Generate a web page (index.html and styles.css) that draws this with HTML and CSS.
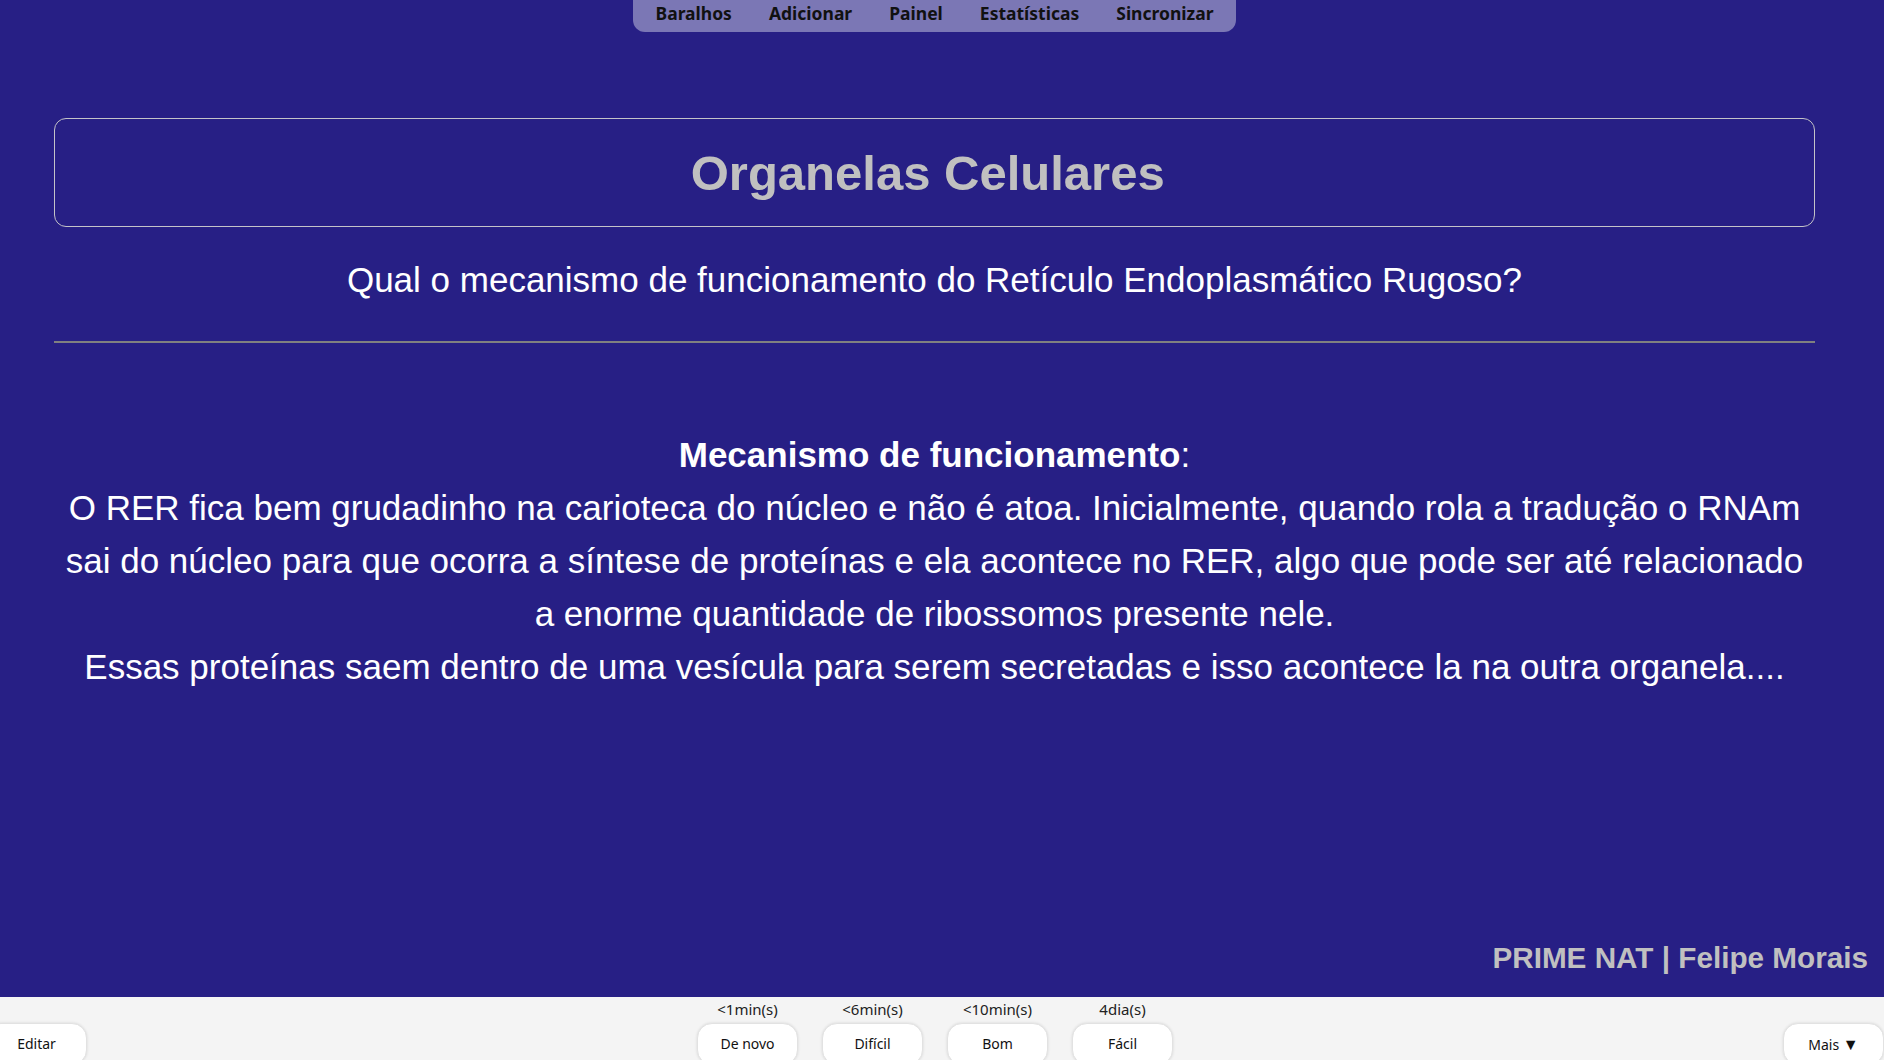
FILE: index.html
```html
<!DOCTYPE html>
<html lang="pt-BR">
<head>
<meta charset="utf-8">
<title>Organelas Celulares</title>
<link rel="stylesheet" href="styles.css">
</head>
<body>
<div class="app">
  <div class="webview">
    <nav class="toolbar">
      <span class="tb-item">Baralhos</span>
      <span class="tb-item">Adicionar</span>
      <span class="tb-item">Painel</span>
      <span class="tb-item">Estatísticas</span>
      <span class="tb-item">Sincronizar</span>
    </nav>
    <div class="card">
      <div class="deck-box">
        <h1 class="deck-title">Organelas Celulares&nbsp;</h1>
      </div>
      <div class="question">Qual o mecanismo de funcionamento do Retículo Endoplasmático Rugoso?</div>
      <hr class="divider">
      <div class="answer"><b>Mecanismo de funcionamento</b>:<br>O RER fica bem grudadinho na carioteca do núcleo e não é atoa. Inicialmente, quando rola a tradução o RNAm sai do núcleo para que ocorra a síntese de proteínas e ela acontece no RER, algo que pode ser até relacionado a enorme quantidade de ribossomos presente nele.<br>Essas proteínas saem dentro de uma vesícula para serem secretadas e isso acontece la na outra organela....</div>
    </div>
    <div class="signature">PRIME NAT | Felipe Morais</div>
  </div>
  <div class="bottombar">
    <div class="bb-left">
      <button class="bb-btn edit-btn">Editar</button>
    </div>
    <div class="bb-middle">
      <div class="ans">
        <span class="ans-time">&lt;1min(s)</span>
        <button class="bb-btn">De novo</button>
      </div>
      <div class="ans">
        <span class="ans-time">&lt;6min(s)</span>
        <button class="bb-btn">Difícil</button>
      </div>
      <div class="ans">
        <span class="ans-time">&lt;10min(s)</span>
        <button class="bb-btn">Bom</button>
      </div>
      <div class="ans">
        <span class="ans-time">4dia(s)</span>
        <button class="bb-btn">Fácil</button>
      </div>
    </div>
    <div class="bb-right">
      <button class="bb-btn">Mais <span class="caret">▼</span></button>
    </div>
  </div>
</div>
</body>
</html>
```

FILE: styles.css
```css
* {
  box-sizing: border-box;
}

html, body {
  margin: 0;
  padding: 0;
  height: 100%;
  overflow: hidden;
}

body {
  background: #271f85;
  font-family: "Liberation Sans", Arial, sans-serif;
}

.app {
  width: 1884px;
  height: 1060px;
  display: flex;
  flex-direction: column;
}

.webview {
  height: 997px;
  width: 1869px;
  display: flex;
  flex-direction: column;
}

.toolbar {
  align-self: center;
  display: flex;
  gap: 37px;
  height: 32px;
  padding: 0 23px;
  background: #7b77b5;
  border-radius: 0 0 12px 12px;
  font-family: "Noto Sans", sans-serif;
  font-weight: 700;
  font-size: 17.5px;
  line-height: 27px;
  color: #111;
}

.tb-item {
  white-space: nowrap;
}

.card {
  padding: 0 54px;
  text-align: center;
  color: #fff;
}

.deck-box {
  margin-top: 86px;
  height: 109px;
  border: 1px solid #c3c3c8;
  border-radius: 12px;
  display: flex;
  align-items: center;
  justify-content: center;
}

.deck-title {
  margin: 0;
  font-size: 49px;
  font-weight: 700;
  line-height: 56px;
  color: #c0c0c0;
  white-space: nowrap;
}

.question {
  margin-top: 26px;
  font-size: 35px;
  line-height: 53px;
}

.divider {
  margin: 35px 0 0;
  border: none;
  height: 2px;
  background: #808080;
}

.answer {
  margin-top: 85px;
  font-size: 35px;
  line-height: 53px;
}

.signature {
  margin-top: auto;
  margin-bottom: 21px;
  padding-right: 1px;
  text-align: right;
  font-size: 29.7px;
  font-weight: 700;
  line-height: 36px;
  color: #c0c0c0;
}

.bottombar {
  height: 63px;
  background: #f4f4f4;
  display: flex;
  align-items: flex-start;
  overflow: hidden;
  font-family: "Noto Sans", sans-serif;
  color: #111;
}

.bb-left {
  width: 87px;
  padding-top: 26px;
}

.bb-right {
  width: 101px;
  padding-top: 26px;
}

.bb-middle {
  flex: 1;
  display: flex;
  justify-content: center;
  gap: 24px;
}

.ans {
  display: flex;
  flex-direction: column;
  align-items: center;
}

.ans-time {
  margin-top: 2px;
  height: 20px;
  font-size: 15px;
  line-height: 20px;
  color: #222;
}

.bb-btn {
  margin-top: 4px;
  width: 101px;
  height: 42px;
  padding: 0;
  background: #fff;
  border: 1px solid #e2e2e2;
  border-radius: 15px;
  box-shadow: 0 0 3px rgba(0, 0, 0, 0.12);
  font-family: "Noto Sans", sans-serif;
  font-size: 14px;
  line-height: 38px;
  color: #111;
  text-align: center;
  display: block;
}

.caret {
  font-size: 16px;
}

.bb-left .bb-btn,
.bb-right .bb-btn {
  margin-top: 0;
}

.edit-btn {
  margin-left: -14px;
}
```
